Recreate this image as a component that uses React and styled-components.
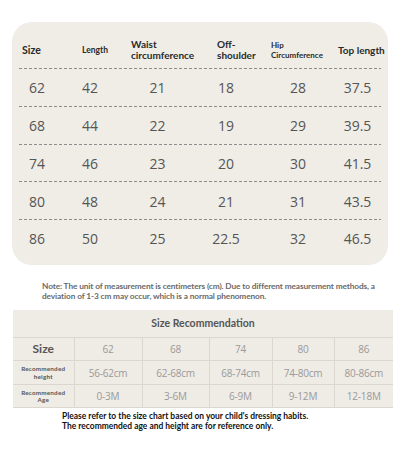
import React from 'react';
import styled, { createGlobalStyle } from 'styled-components';

const GlobalStyle = createGlobalStyle`
  body {
    margin: 0;
    padding: 0;
    background: #ffffff;
    font-family: 'Open Sans', 'Liberation Sans', sans-serif;
  }
`;

const Page = styled.div`
  width: 400px;
  height: 458px;
  overflow: hidden;
  display: flex;
  flex-direction: column;
`;

// Top measurement card
const Card = styled.div`
  margin: 22px 12px 0;
  background: #f0ede7;
  border-radius: 20px;
  padding: 0 7px 8px;
`;

const columns = '36px 70px 65px 72px 72px 47px';

const HeaderRow = styled.div`
  display: grid;
  grid-template-columns: ${columns};
  height: 46px;
  align-items: center;
  padding-top: 10px;
  box-sizing: border-box;
`;

const HeadCell = styled.div`
  padding-left: ${(p) => p.$indent}px;
  font-family: Lato, 'Liberation Sans', sans-serif;
  font-weight: 700;
  font-size: ${(p) => p.$size}px;
  line-height: ${(p) => p.$lh || 11}px;
  color: #2a2a2a;
  white-space: nowrap;
`;

const DataRow = styled.div`
  display: grid;
  grid-template-columns: ${columns};
  height: 37.75px;
  align-items: center;
  padding-top: 2px;
  box-sizing: border-box;
  background: repeating-linear-gradient(90deg, #8c8c8c 0 3px, transparent 3px 5px) top left / 100% 1px no-repeat;
`;

const Value = styled.div`
  text-align: center;
  font-size: 14px;
  color: #555;
`;

const Note = styled.p`
  margin: 16px 0 0;
  padding: 0 20px 0 42px;
  font-family: Lato, 'Liberation Sans', sans-serif;
  font-weight: 700;
  font-size: 8.3px;
  letter-spacing: -0.12px;
  line-height: 10px;
  color: #6a6a6a;
`;

// Size recommendation table
const RecTable = styled.table`
  margin: 9px 0 0 13px;
  width: 380px;
  border-collapse: collapse;
  background: #efebe5;
  table-layout: fixed;
`;

const Title = styled.th`
  height: 27px;
  padding: 0;
  font-family: Lato, 'Liberation Sans', sans-serif;
  font-weight: 700;
  font-size: 10.5px;
  color: #555;
  border-bottom: 1px solid #dcd7ce;
`;

const RowHead = styled.td`
  height: 22.5px;
  padding: 0;
  text-align: center;
  font-family: Lato, 'Liberation Sans', sans-serif;
  font-weight: 700;
  color: #555;
  font-size: ${(p) => (p.$small ? 6.3 : 12)}px;
  line-height: ${(p) => (p.$small ? 7.5 : 14)}px;
  letter-spacing: ${(p) => (p.$small ? 0.2 : 0)}px;
  border-bottom: 1px solid #dcd7ce;
  border-right: 1px solid #dcd7ce;
`;

const RecCell = styled.td`
  height: 22.5px;
  padding: 0;
  text-align: center;
  font-size: 10px;
  color: #9a9a9a;
  letter-spacing: -0.2px;
  border-bottom: 1px solid #dcd7ce;
  border-right: ${(p) => (p.$last ? 'none' : '1px solid #dcd7ce')};
`;

const Footnote = styled.p`
  margin: 4px 0 0;
  padding: 0 80px 0 62px;
  font-family: Lato, 'Liberation Sans', sans-serif;
  font-weight: 700;
  font-size: 8.45px;
  line-height: 9.5px;
  color: #111;
`;

const headers = [
  { label: 'Size', size: 10.5, indent: 3 },
  { label: 'Length', size: 8.5, indent: 27 },
  { label: 'Waist\ncircumference', size: 10, indent: 6 },
  { label: 'Off-\nshoulder', size: 10, indent: 27 },
  { label: 'Hip\nCircumference', size: 8, indent: 9, lh: 10 },
  { label: 'Top length', size: 10, indent: 4 },
];

const rows = [
  ['62', '42', '21', '18', '28', '37.5'],
  ['68', '44', '22', '19', '29', '39.5'],
  ['74', '46', '23', '20', '30', '41.5'],
  ['80', '48', '24', '21', '31', '43.5'],
  ['86', '50', '25', '22.5', '32', '46.5'],
];

const recSizes = ['62', '68', '74', '80', '86'];
const recHeights = ['56-62cm', '62-68cm', '68-74cm', '74-80cm', '80-86cm'];
const recAges = ['0-3M', '3-6M', '6-9M', '9-12M', '12-18M'];
const recWidths = [61, 68, 67, 63, 62, 59];

const App = () => (
  <>
    <GlobalStyle />
    <Page>
      <Card>
        <HeaderRow>
          {headers.map((h) => (
            <HeadCell key={h.label} $size={h.size} $indent={h.indent} $lh={h.lh}>
              {h.label.split('\n').map((line) => (
                <div key={line}>{line}</div>
              ))}
            </HeadCell>
          ))}
        </HeaderRow>
        {rows.map((row) => (
          <DataRow key={row[0]}>
            {row.map((v, i) => (
              <Value key={i}>{v}</Value>
            ))}
          </DataRow>
        ))}
      </Card>

      <Note>
        Note: The unit of measurement is centimeters (cm). Due to different measurement methods, a
        deviation of 1-3 cm may occur, which is a normal phenomenon.
      </Note>

      <RecTable>
        <colgroup>
          {recWidths.map((w, i) => (
            <col key={i} style={{ width: w }} />
          ))}
        </colgroup>
        <thead>
          <tr>
            <Title colSpan={6}>Size Recommendation</Title>
          </tr>
        </thead>
        <tbody>
          <tr>
            <RowHead>Size</RowHead>
            {recSizes.map((v, i) => (
              <RecCell key={v} $last={i === 4}>{v}</RecCell>
            ))}
          </tr>
          <tr>
            <RowHead $small>Recommended<br />height</RowHead>
            {recHeights.map((v, i) => (
              <RecCell key={v} $last={i === 4}>{v}</RecCell>
            ))}
          </tr>
          <tr>
            <RowHead $small>Recommended<br />Age</RowHead>
            {recAges.map((v, i) => (
              <RecCell key={v} $last={i === 4}>{v}</RecCell>
            ))}
          </tr>
        </tbody>
      </RecTable>

      <Footnote>
        Please refer to the size chart based on your child's dressing habits. The
        recommended age and height are for reference only.
      </Footnote>
    </Page>
  </>
);

export default App;
